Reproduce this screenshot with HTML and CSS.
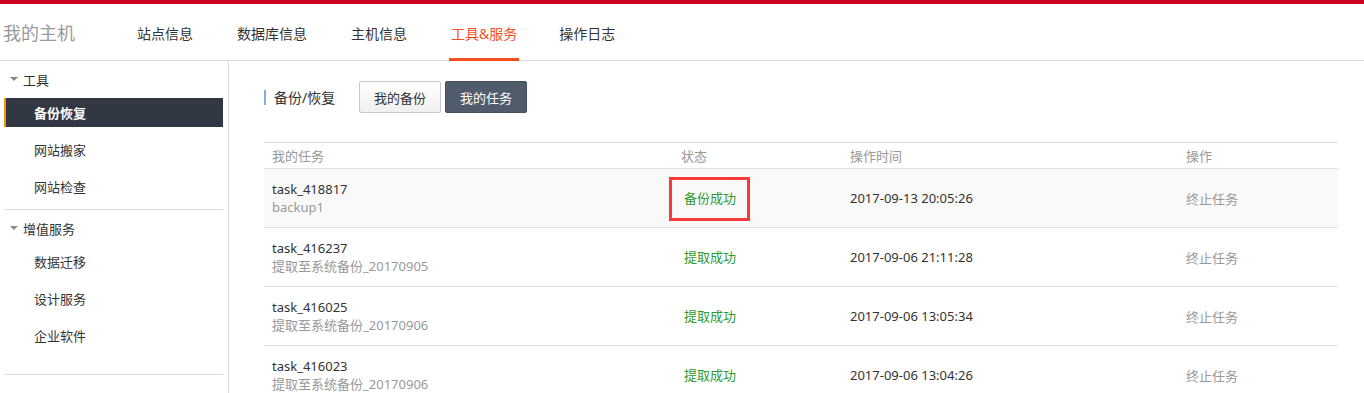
FILE: index.html
```html
<!DOCTYPE html>
<html lang="zh-CN">
<head>
<meta charset="utf-8">
<title>我的主机</title>
<link rel="stylesheet" href="styles.css">
</head>
<body>
<div class="topbar"></div>
<header class="header">
  <div class="logo">我的主机</div>
  <nav class="nav">
    <a class="nav-item">站点信息</a>
    <a class="nav-item">数据库信息</a>
    <a class="nav-item">主机信息</a>
    <a class="nav-item active">工具&amp;服务</a>
    <a class="nav-item">操作日志</a>
  </nav>
</header>
<div class="layout">
  <aside class="sidebar">
    <div class="group">
      <div class="group-title"><span class="caret"></span>工具</div>
      <div class="side-item active">备份恢复</div>
      <div class="side-item">网站搬家</div>
      <div class="side-item">网站检查</div>
    </div>
    <div class="group group-last">
      <div class="group-title"><span class="caret"></span>增值服务</div>
      <div class="side-item">数据迁移</div>
      <div class="side-item">设计服务</div>
      <div class="side-item">企业软件</div>
    </div>
  </aside>
  <main class="main">
    <div class="toolbar">
      <div class="page-title">备份/恢复</div>
      <div class="tabs">
        <button class="btn">我的备份</button>
        <button class="btn btn-dark">我的任务</button>
      </div>
    </div>
    <div class="table">
      <div class="row head">
        <div class="c c1">我的任务</div>
        <div class="c c2">状态</div>
        <div class="c c3">操作时间</div>
        <div class="c c4">操作</div>
      </div>
      <div class="row odd">
        <div class="c c1"><div class="name">task_418817</div><div class="sub">backup1</div></div>
        <div class="c c2"><span class="status marked">备份成功</span></div>
        <div class="c c3">2017-09-13 20:05:26</div>
        <div class="c c4 op">终止任务</div>
      </div>
      <div class="row">
        <div class="c c1"><div class="name">task_416237</div><div class="sub">提取至系统备份_20170905</div></div>
        <div class="c c2"><span class="status">提取成功</span></div>
        <div class="c c3">2017-09-06 21:11:28</div>
        <div class="c c4 op">终止任务</div>
      </div>
      <div class="row">
        <div class="c c1"><div class="name">task_416025</div><div class="sub">提取至系统备份_20170906</div></div>
        <div class="c c2"><span class="status">提取成功</span></div>
        <div class="c c3">2017-09-06 13:05:34</div>
        <div class="c c4 op">终止任务</div>
      </div>
      <div class="row">
        <div class="c c1"><div class="name">task_416023</div><div class="sub">提取至系统备份_20170906</div></div>
        <div class="c c2"><span class="status">提取成功</span></div>
        <div class="c c3">2017-09-06 13:04:26</div>
        <div class="c c4 op">终止任务</div>
      </div>
    </div>
  </main>
</div>
</body>
</html>
```

FILE: styles.css
```css
* { box-sizing: border-box; }
html, body { margin: 0; padding: 0; }
body {
  font-family: "Noto Sans", "Noto Sans CJK SC", sans-serif;
  font-size: 13px;
  color: #333;
  background: #fff;
}
.topbar { height: 4px; background: #cc0020; }
.header {
  height: 57px;
  display: flex;
  align-items: stretch;
  border-bottom: 1px solid #ddd;
}
.logo {
  font-size: 18px;
  color: #999;
  padding-left: 3px;
  width: 135px;
  display: flex;
  align-items: center;
}
.nav { display: flex; gap: 40px; }
.nav-item {
  font-size: 14px;
  color: #333;
  display: flex;
  align-items: center;
  padding: 0 2px;
  height: 57px;
  margin-bottom: -1px;
  border-bottom: 3px solid transparent;
  padding-top: 3px;
}
.nav-item.active { color: #f4501e; border-bottom-color: #f4501e; }
.nav-item.active + .nav-item { margin-left: -2px; }

.layout { display: flex; min-height: calc(100vh - 61px); }
.sidebar {
  width: 229px;
  flex: none;
  padding-left: 4px;
  padding-right: 5px;
  border-right: 1px solid #ddd;
}
.group { border-bottom: 1px solid #ddd; }
.group-last { padding-bottom: 16px; }
.group-title {
  height: 36px;
  display: flex;
  align-items: center;
  padding-left: 6px;
  font-size: 13px;
  color: #333;
  margin-bottom: 1px;
}
.caret {
  width: 0; height: 0;
  border-left: 4px solid transparent;
  border-right: 4px solid transparent;
  border-top: 4px solid #888;
  margin-right: 5px;
}
.side-item {
  height: 29px;
  margin-bottom: 8px;
  display: flex;
  align-items: center;
  padding-left: 30px;
  font-size: 13px;
  color: #333;
}
.side-item.active {
  background: #323843;
  color: #fff;
  font-weight: bold;
  border-left: 2px solid #f39800;
  padding-left: 28px;
}

.main { flex: 1; padding: 20px 26px 0 35px; }
.toolbar { display: flex; align-items: center; height: 32px; }
.page-title {
  font-size: 14px;
  color: #333;
  border-left: 2px solid #7fb0e0;
  padding-left: 8px;
  line-height: 15px;
  width: 95px;
}
.tabs { display: flex; gap: 4px; }
.btn {
  width: 82px;
  height: 32px;
  font-family: inherit;
  font-size: 13px;
  color: #333;
  border: 1px solid #c8c8c8;
  border-radius: 2px;
  background: linear-gradient(#fff, #f0f0f0);
  padding: 0;
}
.btn-dark { background: #505b6c; border-color: #454e5d; color: #fff; }

.table { margin-top: 29px; border-top: 1px solid #ddd; }
.row { display: flex; align-items: center; border-bottom: 1px solid #e0e0e0; height: 59px; }
.row.head { height: 26px; color: #999; }
.row.odd { background: #f9f9f9; }
.c { padding-left: 8px; }
.c1 { width: 409px; }
.c2 { width: 169px; }
.c3 { width: 336px; }
.c4 { flex: 1; }
.name { line-height: 18px; color: #333; }
.sub { line-height: 18px; color: #999; }
.status { color: #2f9a2f; padding-left: 3px; position: relative; line-height: 18px; display: inline-block; }
.status.marked::after {
  content: "";
  position: absolute;
  left: -12px; right: -14px; top: -12px; bottom: -14px;
  border: 3px solid #f63b3b;
}
.op { color: #999; }
```
